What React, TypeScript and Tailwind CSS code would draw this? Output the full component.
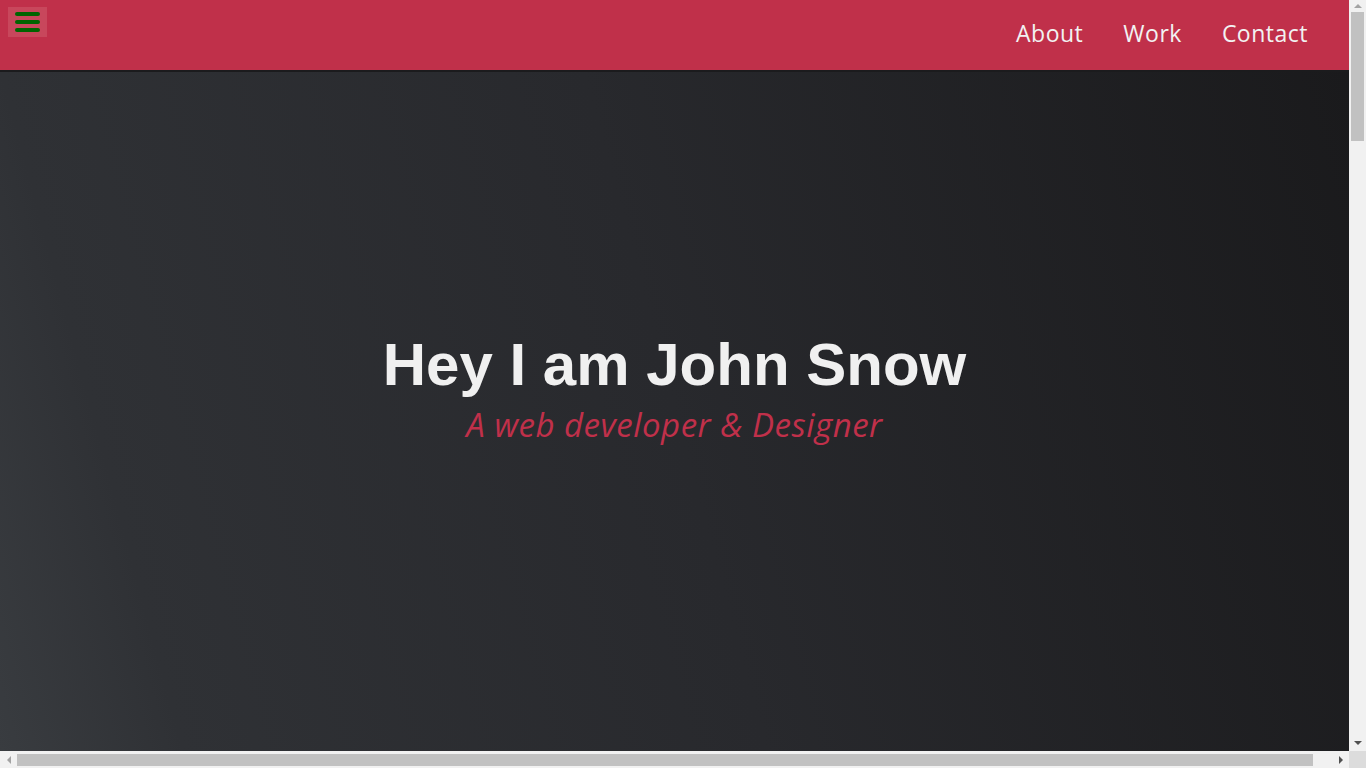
const sans = { fontFamily: "'Liberation Sans', Arial, sans-serif" };
const round = { fontFamily: "'Open Sans', Lato, sans-serif" };

function Hamburger() {
  return (
    <button className="ml-2 mt-[7px] w-[39px] h-[30px] bg-[#c8475c] flex flex-col items-center justify-center gap-1">
      <span className="block w-[25px] h-1 rounded-sm bg-[#006400]" />
      <span className="block w-[25px] h-1 rounded-sm bg-[#006400]" />
      <span className="block w-[25px] h-1 rounded-sm bg-[#006400]" />
    </button>
  );
}

function VScrollbar() {
  return (
    <div className="w-[17px] h-full bg-[#f1f1f1] flex flex-col items-center">
      <div className="h-[12px] flex items-center justify-center">
        <div className="w-0 h-0 border-x-[4px] border-x-transparent border-b-[4px] border-b-[#a3a3a3]" />
      </div>
      <div className="w-[13px] h-[129px] bg-[#c1c1c1]" />
      <div className="flex-1" />
      <div className="h-[17px] flex items-center justify-center">
        <div className="w-0 h-0 border-x-[4px] border-x-transparent border-t-[4px] border-t-[#505050]" />
      </div>
    </div>
  );
}

function HScrollbar() {
  return (
    <div className="h-[17px] flex">
      <div className="flex-1 bg-[#f1f1f1] flex items-center">
        <div className="w-[17px] flex items-center justify-center">
          <div className="w-0 h-0 border-y-[4px] border-y-transparent border-r-[4px] border-r-[#a3a3a3]" />
        </div>
        <div className="w-[1296px] h-[12px] bg-[#c1c1c1]" />
        <div className="flex-1" />
        <div className="w-[17px] flex items-center justify-center">
          <div className="w-0 h-0 border-y-[4px] border-y-transparent border-l-[4px] border-l-[#505050]" />
        </div>
      </div>
      <div className="w-[17px] bg-[#dcdcdc]" />
    </div>
  );
}

export default function App() {
  const links = ["About", "Work", "Contact"];

  return (
    <div className="w-screen h-screen overflow-hidden flex flex-col" style={sans}>
      <div className="flex-1 flex min-h-0">
        <div className="flex-1 flex flex-col min-w-0">
          <header className="h-[72px] bg-[#c0304a] border-b-2 border-[#1b1b1d] flex items-start justify-between shrink-0">
            <Hamburger />
            <nav className="flex gap-10 mr-[41px] mt-[17px]" style={round}>
              {links.map((l) => (
                <a key={l} href="#" className="text-[23px] leading-[32px] tracking-[0.5px] text-[#f2f2f2]">
                  {l}
                </a>
              ))}
            </nav>
          </header>

          <section className="flex-1 bg-[linear-gradient(75deg,#393c40_0%,#2f3135_12%,#28292d_50%,#1a1a1c_100%)]">
            <div className="pt-[260px] flex flex-col items-center">
              <h1 className="text-[60px] leading-[66px] font-bold text-[#f0f0f0]">Hey I am John Snow</h1>
              <p className="mt-[7px] text-[33px] leading-[40px] italic tracking-[0.5px] text-[#c0304a]" style={round}>
                A web developer &amp; Designer
              </p>
            </div>
          </section>
        </div>
        <VScrollbar />
      </div>
      <HScrollbar />
    </div>
  );
}
